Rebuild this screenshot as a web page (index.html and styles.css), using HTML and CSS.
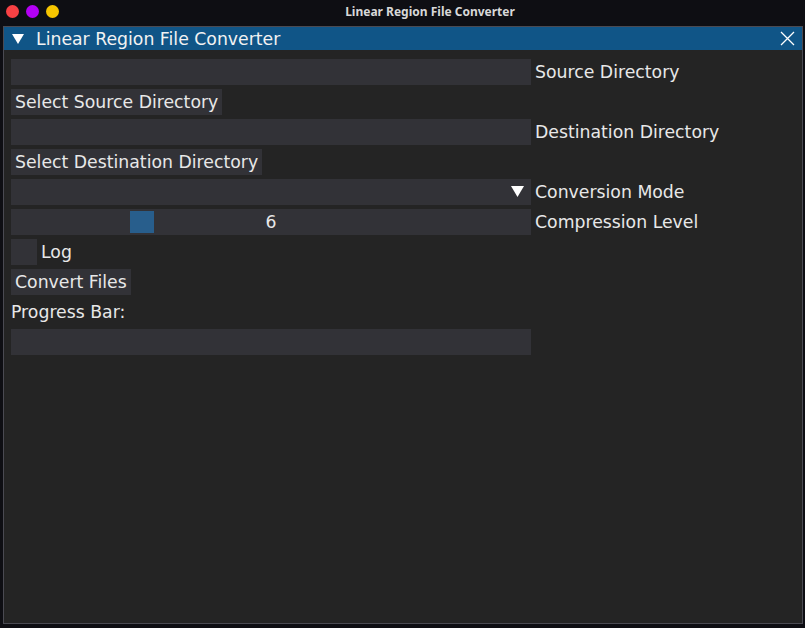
FILE: index.html
```html
<!DOCTYPE html>
<html>
<head>
<meta charset="utf-8">
<link rel="stylesheet" href="styles.css">
</head>
<body>
<div class="os-bar">
  <div class="dots">
    <span class="dot red"></span>
    <span class="dot purple"></span>
    <span class="dot yellow"></span>
  </div>
  <div class="os-title">Linear Region File Converter</div>
</div>
<div class="window">
  <div class="win-title">
    <svg class="collapse" width="12" height="11" viewBox="0 0 12 11"><polygon points="0,0 12,0 6,10" fill="#ffffff"/></svg>
    <span class="win-title-text">Linear Region File Converter</span>
    <svg class="close" width="15" height="15" viewBox="0 0 15 15"><path d="M1 1 L14 14 M14 1 L1 14" stroke="#ffffff" stroke-width="1.3" fill="none"/></svg>
  </div>
  <div class="content">
    <div class="row"><div class="field"></div><span class="label">Source Directory</span></div>
    <div class="row"><div class="button">Select Source Directory</div></div>
    <div class="row"><div class="field"></div><span class="label">Destination Directory</span></div>
    <div class="row"><div class="button">Select Destination Directory</div></div>
    <div class="row"><div class="field combo"><svg class="arrow" width="13" height="12" viewBox="0 0 13 12"><polygon points="0,0 13,0 6.5,11" fill="#ffffff"/></svg></div><span class="label">Conversion Mode</span></div>
    <div class="row"><div class="field slider"><div class="grab"></div><span class="value">6</span></div><span class="label">Compression Level</span></div>
    <div class="row"><div class="check"></div><span class="label log">Log</span></div>
    <div class="row"><div class="button">Convert Files</div></div>
    <div class="row text-row"><span class="label plain">Progress Bar:</span></div>
    <div class="row"><div class="field"></div></div>
  </div>
</div>
</body>
</html>
```

FILE: styles.css
```css
html, body {
  margin: 0;
  padding: 0;
}
body {
  width: 805px;
  height: 628px;
  background: #0e0e13;
  font-family: "DejaVu Sans", sans-serif;
  color: #e8e8e8;
  overflow: hidden;
  display: flex;
  flex-direction: column;
}
.os-bar {
  height: 26px;
  display: flex;
  align-items: flex-start;
  position: relative;
  flex: none;
}
.dots {
  display: flex;
  gap: 7px;
  padding: 5px 0 0 6px;
}
.dot {
  width: 13px;
  height: 13px;
  border-radius: 50%;
  display: block;
}
.red { background: #f94144; }
.purple { background: #b400f5; }
.yellow { background: #f7c600; }
.os-title {
  position: absolute;
  left: 0;
  right: 0;
  top: 3px;
  text-align: center;
  font-family: "Noto Sans", sans-serif;
  font-weight: bold;
  font-size: 12px;
  color: #d8d8d8;
  padding-left: 55px;
}
.window {
  margin: 0 3px;
  width: 798px;
  height: 596px;
  border: 1px solid #4a4a52;
  background: #242424;
  display: flex;
  flex-direction: column;
  flex: none;
}
.win-title {
  height: 23px;
  background: #105587;
  display: flex;
  align-items: center;
  padding: 0 0 0 8px;
  flex: none;
}
.collapse {
  margin-right: 12px;
  margin-top: 1px;
}
.win-title-text {
  font-size: 17.3px;
  color: #f2f2f2;
  flex: 1;
}
.close {
  margin-right: 7px;
}
.content {
  padding: 9px 7px;
  display: flex;
  flex-direction: column;
  gap: 4px;
}
.row {
  display: flex;
  align-items: center;
  height: 26px;
  gap: 4px;
}
.field {
  width: 520px;
  height: 26px;
  background: #323237;
  position: relative;
  flex: none;
}
.combo {
  display: flex;
  align-items: center;
  justify-content: flex-end;
}
.arrow {
  margin-right: 7px;
}
.slider {
  display: flex;
  align-items: center;
  justify-content: center;
}
.grab {
  position: absolute;
  left: 119px;
  top: 2px;
  width: 24px;
  height: 22px;
  background: #285e8c;
}
.value {
  font-size: 17.3px;
  position: relative;
}
.label {
  font-size: 17.3px;
  white-space: nowrap;
}
.button {
  height: 26px;
  background: #323237;
  padding: 0 4px;
  display: flex;
  align-items: center;
  font-size: 17.3px;
  white-space: nowrap;
}
.check {
  width: 26px;
  height: 26px;
  background: #323237;
  flex: none;
}
.text-row {
  height: 26px;
}
```
